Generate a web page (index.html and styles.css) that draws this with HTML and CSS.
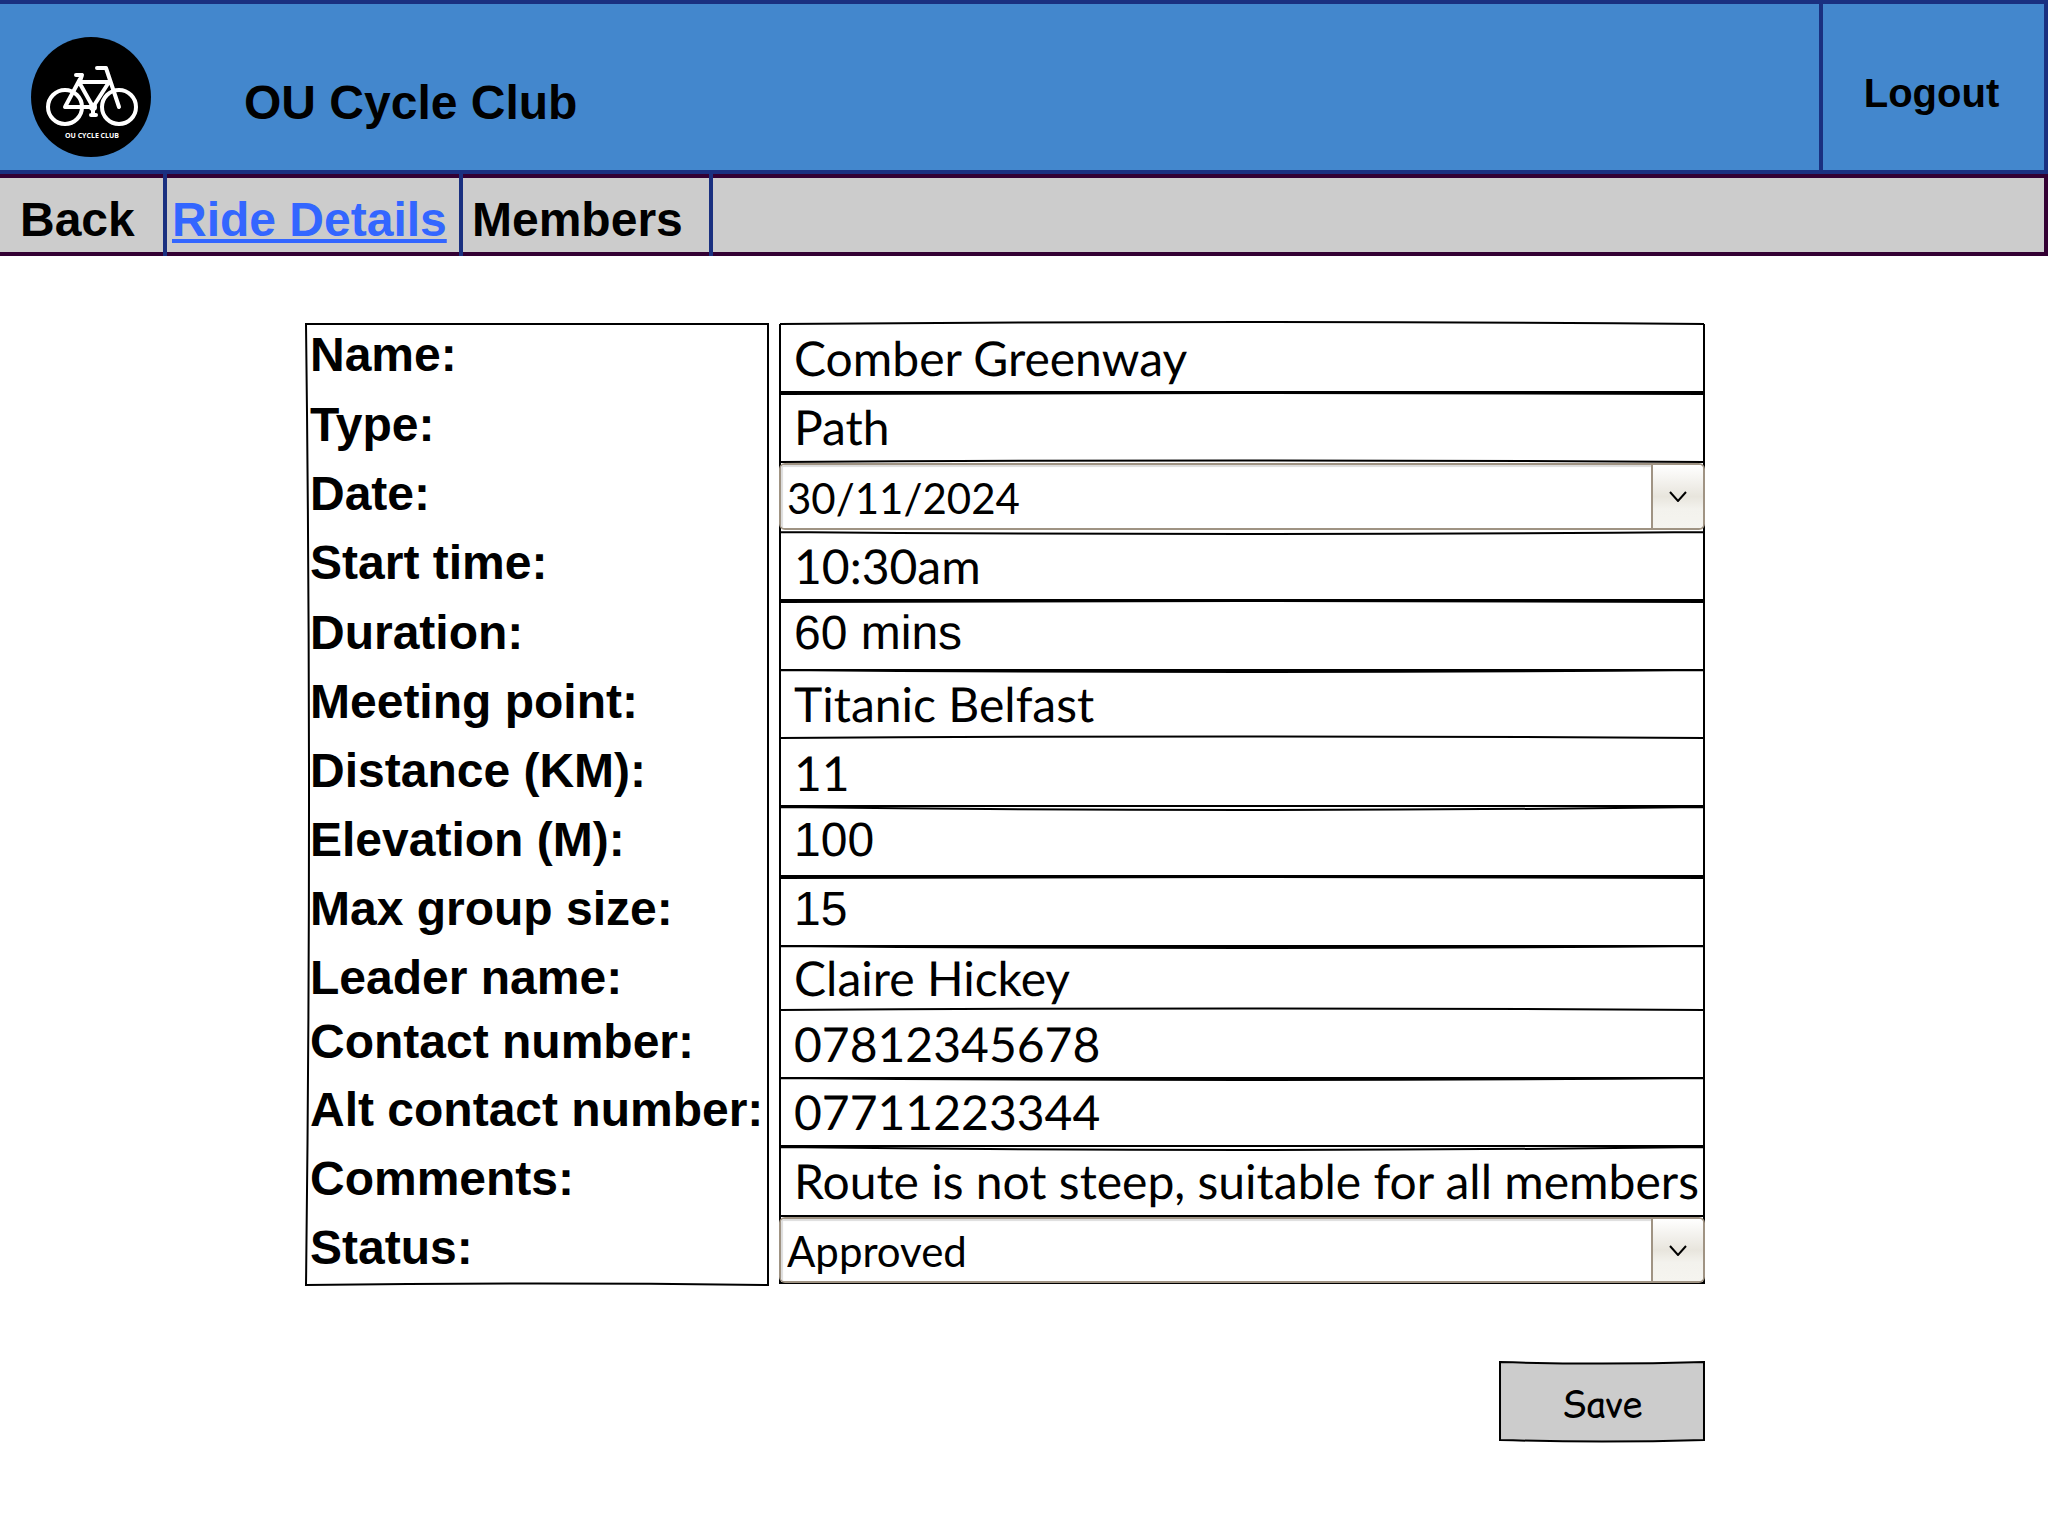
FILE: index.html
```html
<!DOCTYPE html>
<html lang="en">
<head>
<meta charset="utf-8">
<title>OU Cycle Club</title>
<link rel="stylesheet" href="styles.css">
</head>
<body>
<header class="banner">
  <svg class="logo" viewBox="0 0 120 120" role="img" aria-label="OU Cycle Club logo">
    <circle cx="60" cy="60" r="60"/>
    <g class="bike">
      <circle cx="34" cy="70" r="17"/>
      <circle cx="88" cy="70" r="17"/>
      <path d="M34 70L49 42M34 70H62M48 45L62 70L78 45H49M45 38H51M51 38L49 44M66 31H75L88 70M62 70V77M60 78H65"/>
    </g>
    <circle class="crank" cx="62" cy="70" r="4"/>
    <text x="61" y="101" text-anchor="middle">OU CYCLE CLUB</text>
  </svg>
  <h1 class="title">OU Cycle Club</h1>
  <button class="logout" type="button">Logout</button>
</header>
<nav class="tabs">
  <a class="tab back" href="#back">Back</a>
  <a class="tab current" href="#ride">Ride Details</a>
  <a class="tab members" href="#members">Members</a>
</nav>
<main>
  <form class="ride">
    <div class="labels">
      <svg class="frame" viewBox="0 0 464 961" preserveAspectRatio="none" aria-hidden="true"><path d="M1 1H463Q465 480 463 962Q232 959 1 962Q7 480 1 1Z"/></svg>
      <label for="name">Name:</label>
      <label for="type">Type:</label>
      <label for="date">Date:</label>
      <label for="start">Start time:</label>
      <label for="duration">Duration:</label>
      <label for="meeting">Meeting point:</label>
      <label for="distance">Distance (KM):</label>
      <label for="elevation">Elevation (M):</label>
      <label for="size">Max group size:</label>
      <label for="leader">Leader name:</label>
      <label for="contact">Contact number:</label>
      <label for="alt">Alt contact number:</label>
      <label for="comments">Comments:</label>
      <label for="status">Status:</label>
    </div>
    <div class="fields">
      <svg class="frame" viewBox="0 0 926 961" preserveAspectRatio="none" aria-hidden="true"><path d="M1 1V960H925V1M1 1Q463 -3 925 1M1 69H925M1 71Q463 69 925 71M1 139Q463 136 925 139M1 209Q463 213 925 209M1 277H925M1 279Q463 277 925 279M1 347H925M1 347Q463 351 925 347M1 415Q463 412 925 415M1 483H925M1 484Q463 490 925 484M1 553H925M1 555Q463 553 925 555M1 623H925M1 623Q463 627 925 623M1 687Q463 684 925 687M1 755H925M1 755Q463 759 925 755M1 823H925M1 824Q463 830 925 824M1 893H925"/></svg>
      <input class="field" id="name" value="Comber Greenway">
      <input class="field" id="type" value="Path">
      <div class="picker"><select id="date"><option>30/11/2024</option></select><span class="arrow"><svg viewBox="0 0 18 11" aria-hidden="true"><path d="M1 1L9 10L17 1"/></svg></span></div>
      <input class="field" id="start" value="10:30am">
      <input class="field plain" id="duration" value="60 mins">
      <input class="field" id="meeting" value="Titanic Belfast">
      <input class="field" id="distance" value="11">
      <input class="field plain" id="elevation" value="100">
      <input class="field plain" id="size" value="15">
      <input class="field" id="leader" value="Claire Hickey">
      <input class="field" id="contact" value="07812345678">
      <input class="field" id="alt" value="07711223344">
      <input class="field" id="comments" value="Route is not steep, suitable for all members">
      <div class="picker"><select id="status"><option>Approved</option></select><span class="arrow"><svg viewBox="0 0 18 11" aria-hidden="true"><path d="M1 1L9 10L17 1"/></svg></span></div>
    </div>
    <button class="save" type="button"><svg class="frame" viewBox="0 0 204 78" preserveAspectRatio="none" aria-hidden="true"><path d="M1 1Q102 4 203 1V77Q102 80 1 77Z"/></svg><span>Save</span></button>
  </form>
</main>
</body>
</html>
```
FILE: styles.css
```css
* { box-sizing: border-box; }
body { margin: 0; background: #fff; color: #000; font-family: "Liberation Sans", Arial, sans-serif; }
button, input, select { margin: 0; color: inherit; font: inherit; border-radius: 0; }

.banner { display: flex; align-items: stretch; height: 174px; background: #4387cd; border: 4px solid #1a3080; border-left: 0; }
.logo { width: 120px; height: 120px; margin: 33px 0 0 31px; }
.logo text { fill: #fff; font: bold 7px "Open Sans", sans-serif; }
.bike { fill: none; stroke: #fff; stroke-width: 4; stroke-linecap: round; stroke-linejoin: round; }
.crank { fill: #fff; }
.title { flex: 1; margin: 71px 0 0 93px; font-size: 48px; line-height: 56px; }
.logout { width: 225px; padding: 12px 4px 0 0; border: 0; border-left: 4px solid #1a3080; background: none; font-size: 40px; font-weight: bold; line-height: 48px; }

.tabs { display: flex; height: 82px; background: #ccc; border: 4px solid #330033; border-left: 0; }
.tab { display: flex; align-items: center; margin: -4px 0; padding-top: 8px; border-right: 4px solid #1a3080; color: #000; font-size: 48px; font-weight: bold; text-decoration: none; }
.back { width: 167px; padding-left: 20px; }
.current { width: 296px; padding-left: 5px; color: #36f; text-decoration: underline; }
.members { width: 250px; padding-left: 9px; }

main { display: flex; justify-content: center; padding: 67px 38px 92px 0; }
.ride { display: grid; grid-template-columns: 464px 926px; column-gap: 10px; width: 1400px; }
.labels, .fields { position: relative; display: grid; grid-template-rows: 70px 69px 69px 70px repeat(5, 69px) 64px 68px 69px 69px 68px; }
.labels { padding-left: 5px; font-size: 48px; font-weight: bold; white-space: nowrap; }
.labels label { line-height: 64px; }
.frame { position: absolute; inset: 0; width: 100%; height: 100%; overflow: visible; z-index: -1; }
.frame path { fill: none; stroke: #000; stroke-width: 2; vector-effect: non-scaling-stroke; }
.field { width: 100%; min-width: 0; padding: 0 0 0 15px; border: 0; background: none; font-family: Lato, sans-serif; font-size: 48px; text-rendering: geometricPrecision; }
.plain { padding-bottom: 4px; font-family: "Liberation Sans", Arial, sans-serif; }
.picker { display: grid; grid-template-columns: 1fr 52px; margin: 1px 0; border: 2px solid #9f9383; border-radius: 6px; overflow: hidden; }
.picker select { appearance: none; padding: 2px 0 0 6px; border: 0; background: #fff; box-shadow: inset 2px 2px 1px #ddd; font-family: Lato, sans-serif; font-size: 42px; }
.arrow { display: grid; place-items: center; border-left: 2px solid #9f9383; background: linear-gradient(#fff, #e8e5dd 50%, #f3f2ed 70%, #f5f4ef); pointer-events: none; }
.arrow svg { width: 18px; height: 11px; fill: none; stroke: #000; stroke-width: 2; }

.save { position: relative; z-index: 0; grid-column: 2; justify-self: end; width: 206px; height: 80px; margin-top: 77px; padding: 6px 0 0; border: 0; background: none; font-family: "Comic Relief", "Comic Sans MS", "Comic Neue", Lato, sans-serif; font-size: 36px; }
.save .frame path { fill: #ccc; }
```
